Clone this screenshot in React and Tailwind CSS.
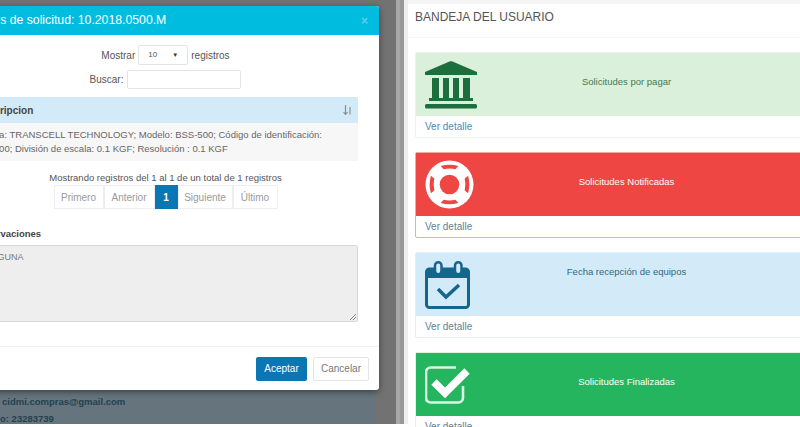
import React from 'react';

const font = { fontFamily: '"Liberation Sans", Arial, sans-serif' };

// panel de la bandeja: franja de color + enlace "Ver detalle"
function Panel({ head, border, text, label, link, icon, top }) {
  return (
    <div className={`rounded-[2px] border bg-white ${border}`}>
      <div className={`flex h-[63px] ${head}`}>
        <div className="flex w-[69px] shrink-0 items-center pl-[9px]">{icon}</div>
        <div className={`flex-1 pr-[35px] text-center text-[9.5px] leading-[12px] ${top ? 'pt-[13px]' : 'pt-[23px]'} ${text}`}>{label}</div>
      </div>
      <div className={`h-[21px] pl-[9px] pt-[5px] text-[10px] leading-[12px] ${link}`}>Ver detalle</div>
    </div>
  );
}

function BankIcon() {
  return (
    <svg width="52" height="48" viewBox="0 0 52 48" fill="#1c6f3d">
      <path d="M24.5 0.5 Q26 0 27.5 0.5 L52 11 V14 H0 V11 Z" />
      <rect x="7" y="17" width="7" height="20" />
      <rect x="18" y="17" width="6" height="20" />
      <rect x="28" y="17" width="6" height="20" />
      <rect x="38" y="17" width="7" height="20" />
      <rect x="4" y="37" width="44" height="3" />
      <rect x="0" y="43" width="52" height="4.5" rx="1.5" />
    </svg>
  );
}

function LifeRingIcon() {
  return (
    <svg width="49" height="49" viewBox="0 0 50 50">
      <circle cx="25" cy="25" r="24.5" fill="#fff" />
      <circle cx="25" cy="25" r="10" fill="#ee4643" />
      <path d="M16 6 Q25 3.5 34 6 L31 9.5 Q25 8 19 9.5 Z" fill="#ee4643" />
      <path d="M16 44 Q25 46.5 34 44 L31 40.5 Q25 42 19 40.5 Z" fill="#ee4643" />
      <path d="M6 16 Q3.5 25 6 34 L9.5 31 Q8 25 9.5 19 Z" fill="#ee4643" />
      <path d="M44 16 Q46.5 25 44 34 L40.5 31 Q42 25 40.5 19 Z" fill="#ee4643" />
    </svg>
  );
}

function CalendarIcon() {
  return (
    <svg width="45" height="48" viewBox="0 0 45 48" fill="none">
      <rect x="1.5" y="8" width="42" height="38.5" rx="3" stroke="#15668c" strokeWidth="3" />
      <path d="M1.5 11 a3 3 0 0 1 3 -3 H40.5 a3 3 0 0 1 3 3 V17 H1.5 Z" fill="#15668c" />
      <rect x="10" y="1.25" width="6.5" height="12" rx="3.25" fill="#d3ebf8" stroke="#15668c" strokeWidth="2.5" />
      <rect x="30" y="1.25" width="6.5" height="12" rx="3.25" fill="#d3ebf8" stroke="#15668c" strokeWidth="2.5" />
      <path d="M13 28 L21 36 L34 24" stroke="#15668c" strokeWidth="3.5" />
    </svg>
  );
}

function CheckIcon() {
  return (
    <svg width="46" height="38" viewBox="0 0 46 38" fill="none">
      <path d="M38 20 V32 a4.5 4.5 0 0 1 -4.5 4.5 H5.5 a4.5 4.5 0 0 1 -4.5 -4.5 V6 a4.5 4.5 0 0 1 4.5 -4.5 H31" stroke="#d9f5e3" strokeWidth="2.6" />
      <path d="M9 16 L20 27 L42 5" stroke="#fff" strokeWidth="7.5" />
    </svg>
  );
}

function SortIcon() {
  return (
    <svg width="9" height="10" viewBox="0 0 9 10" fill="none" stroke="#8a8f92" strokeWidth="1.2">
      <path d="M2.5 0 V9 M0.5 7 L2.5 9.5 L4.5 7" />
      <path d="M7 2 V9.5" />
    </svg>
  );
}

function PageButton({ children, active, width }) {
  return (
    <span
      className={`flex h-[24px] items-center justify-center border text-[10px] ${width} ${
        active ? 'border-[#0a76b4] bg-[#0a76b4] font-bold text-white' : 'border-[#eeeeee] text-[#9a9a9a]'
      }`}
    >
      {children}
    </span>
  );
}

export default function App() {
  return (
    <div className="flex h-[427px] w-[800px] overflow-hidden bg-white text-[#555]" style={font}>
      {/* lado izquierdo: modal sobre el fondo oscurecido */}
      <div className="flex h-[424px] w-[396px] shrink-0 flex-col bg-[#727272] pt-[6px]">
        <div className="z-10 ml-[-48px] flex h-[384px] w-[427px] shrink-0 flex-col rounded-[3px] bg-white shadow-[0_2px_6px_rgba(0,0,0,0.45)]">
          <div className="flex h-[29px] items-center justify-between rounded-t-[3px] bg-[#00bde0] pl-[10px] pr-[11px] text-white">
            <span className="whitespace-nowrap text-[12.25px]">Detalles de solicitud: 10.2018.0500.M</span>
            <span className="text-[12px] font-bold text-[#58cfe6]">×</span>
          </div>

          <div className="flex flex-1 flex-col px-[21px]">
            <div className="mt-[10px] flex h-[20px] items-center justify-center gap-[3px] text-[10px]">
              <span>Mostrar</span>
              <span className="flex h-[20px] w-[50px] items-center justify-between rounded-[2px] border border-[#e4e4e4] px-[9px] text-[8px]">
                10<span className="text-[6px] text-[#333]">▼</span>
              </span>
              <span>registros</span>
            </div>
            <div className="mt-[5px] flex h-[19px] items-center justify-center gap-[4px] text-[10px]">
              <span>Buscar:</span>
              <span className="h-[19px] w-[114px] rounded-[2px] border border-[#e4e4e4]" />
            </div>

            <div className="mt-[8px] flex h-[26px] items-center justify-between bg-[#d3ebf8] px-[3px] pr-[6px] text-[10px] font-bold text-[#444]">
              <span>Descripcion</span>
              <SortIcon />
            </div>
            <div className="h-[38px] bg-[#f7f7f7] pl-[5px] pt-[5px] text-[9.5px] leading-[14px] text-[#666]">
              <div className="whitespace-nowrap">Marca: TRANSCELL TECHNOLOGY; Modelo: BSS-500; Código de identificación:</div>
              <div className="whitespace-nowrap">SN 500; División de escala: 0.1 KGF; Resolución : 0.1 KGF</div>
            </div>

            <div className="mt-[11px] text-center text-[9.5px] leading-[12px]">Mostrando registros del 1 al 1 de un total de 1 registros</div>
            <div className="mt-[1px] flex justify-center">
              <PageButton width="w-[50px]">Primero</PageButton>
              <PageButton width="w-[51px]">Anterior</PageButton>
              <PageButton width="w-[23px]" active>1</PageButton>
              <PageButton width="w-[55px]">Siguiente</PageButton>
              <PageButton width="w-[45px]">Último</PageButton>
            </div>

            <div className="mt-[19px] text-[9.5px] font-bold leading-[12px] text-[#444]">Observaciones</div>
            <div className="relative mt-[5px] h-[77px] rounded-[2px] border border-[#d8d8d8] bg-[#eeeeee] pl-[8px] pt-[5px] text-[9px] text-[#777]">
              NINGUNA
              <svg width="7" height="7" viewBox="0 0 7 7" className="absolute bottom-[1px] right-[1px]" stroke="#888">
                <path d="M1 7 L7 1 M4 7 L7 4" />
              </svg>
            </div>
          </div>

          <div className="flex h-[44px] items-center justify-end gap-[6px] border-t border-[#f2f2f2] pr-[10px] text-[10px]">
            <span className="flex h-[24px] w-[51px] items-center justify-center rounded-[2px] bg-[#0a76b4] text-white">Aceptar</span>
            <span className="flex h-[24px] w-[56px] items-center justify-center rounded-[2px] border border-[#e4e4e4] text-[#777]">Cancelar</span>
          </div>
        </div>

        {/* contenido de la pagina detras del modal */}
        <div className="h-[34px] w-[376px] shrink-0 overflow-hidden bg-[#66757d] pl-[2px] pt-[3px] text-[9.5px] font-bold leading-[17px] text-[#23414f]">
          <div>cidmi.compras@gmail.com</div>
          <div className="ml-[-2px]">o: 23283739</div>
        </div>
      </div>

      {/* barra de separacion */}
      <div className="h-[424px] w-[4px] shrink-0 bg-[#a8a8a8]" />
      <div className="h-[424px] w-[4px] shrink-0 bg-[#999999]" />
      <div className="h-[424px] w-[4px] shrink-0 bg-[#eeeeee]" />

      {/* bandeja del usuario */}
      <div className="flex min-w-0 flex-1 flex-col">
        <div className="h-[4px] shrink-0 bg-[#f5f5f5]" />
        <div className="h-[34px] shrink-0 border-b border-[#f6f6f6] pl-[7px] pt-[6px] text-[12px] leading-[15px] text-[#555]">BANDEJA DEL USUARIO</div>
        <div className="mr-[-4px] mt-[14px] flex flex-col gap-[14px] pl-[7px]">
          <Panel head="bg-[#daf0da]" border="border-[#ecf4ec]" text="text-[#3f7a55]" link="text-[#4f8cb0]" label="Solicitudes por pagar" icon={<BankIcon />} />
          <Panel head="bg-[#ee4643]" border="border-[#f2a8a3]" text="text-white" link="text-[#667f90]" label="Solicitudes Notificadas" icon={<LifeRingIcon />} />
          <Panel head="bg-[#d3ebf8]" border="border-[#e2eff6]" text="text-[#2f6784]" link="text-[#667f90]" label="Fecha recepción de equipos" icon={<CalendarIcon />} top />
          <Panel head="bg-[#25b55f]" border="border-[#dff2e6]" text="text-white" link="text-[#667f90]" label="Solicitudes Finalizadas" icon={<CheckIcon />} />
        </div>
      </div>
    </div>
  );
}
